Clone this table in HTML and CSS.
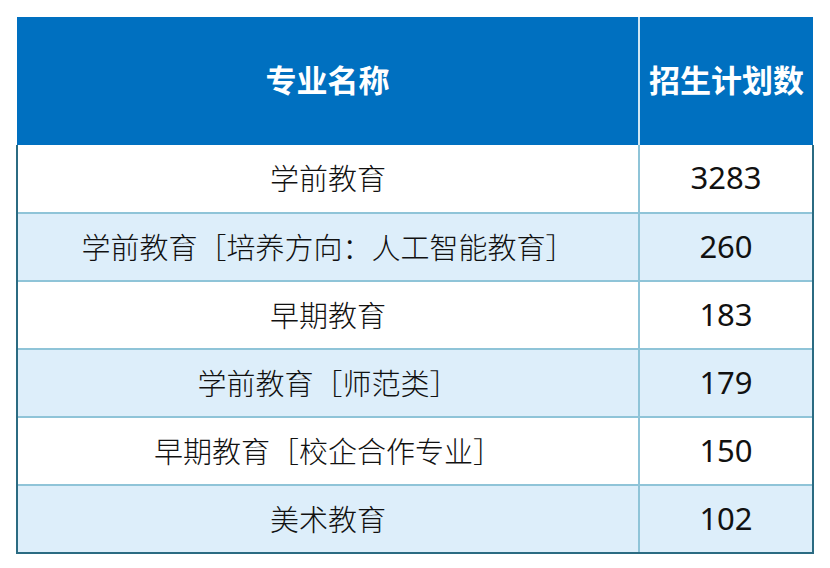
FILE: index.html
```html
<!DOCTYPE html>
<html lang="zh-CN">
<head>
<meta charset="utf-8">
<link rel="stylesheet" href="styles.css">
</head>
<body>
<div class="page">
<table class="plan">
  <thead>
    <tr><th class="name">专业名称</th><th class="num">招生计划数</th></tr>
  </thead>
  <tbody>
    <tr><td class="name">学前教育</td><td class="num">3283</td></tr>
    <tr class="alt"><td class="name">学前教育［培养方向：人工智能教育］</td><td class="num">260</td></tr>
    <tr><td class="name">早期教育</td><td class="num">183</td></tr>
    <tr class="alt"><td class="name">学前教育［师范类］</td><td class="num">179</td></tr>
    <tr><td class="name">早期教育［校企合作专业］</td><td class="num">150</td></tr>
    <tr class="alt"><td class="name">美术教育</td><td class="num">102</td></tr>
  </tbody>
</table>
</div>
</body>
</html>
```
FILE: styles.css
```css
html, body {
  margin: 0;
  padding: 0;
  background: #ffffff;
}
.page {
  padding: 17px 0 0 16px;
}
.plan {
  border-collapse: collapse;
  table-layout: fixed;
  width: 798px;
}
.plan thead th {
  background: #0070c0;
  color: #ffffff;
  font-family: "Noto Sans CJK SC", sans-serif;
  font-weight: 700;
  font-size: 31px;
  height: 122px;
  padding: 0 0 6px 0;
  text-align: center;
}
.plan thead th.name {
  width: 621px;
  border-right: 2px solid #cfe6f3;
}
.plan thead th.num {
  white-space: nowrap;
}
.plan tbody td {
  height: 63px;
  padding: 0 0 3px 0;
  text-align: center;
  color: #111111;
  border-top: 2px solid #8fc4d8;
}
.plan tbody tr:first-child td {
  border-top: none;
  height: 64px;
}
.plan tbody td.name {
  font-family: "Noto Sans CJK SC", serif;
  font-weight: 300;
  font-size: 29px;
  border-left: 2px solid #2b6b82;
  border-right: 2px solid #8fc4d8;
}
.plan tbody td.num {
  font-family: "Noto Sans", "Open Sans", sans-serif;
  font-size: 31px;
  border-right: 2px solid #2b6b82;
}
.plan tbody tr:last-child td {
  border-bottom: 2px solid #2b6b82;
}
.plan tbody tr.alt td {
  background: #ddeefa;
}
```
